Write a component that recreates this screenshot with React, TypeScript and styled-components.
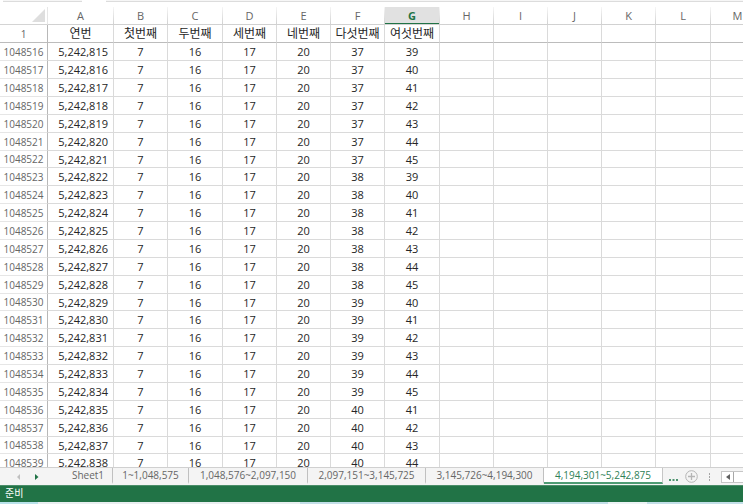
import React from "react";
import { useState } from "react";
import styled, { createGlobalStyle } from "styled-components";

const GlobalStyle = createGlobalStyle`
  * {
    box-sizing: border-box;
  }
  body {
    margin: 0;
    background: #fff;
    font-family: "Open Sans", "Noto Sans CJK KR", sans-serif;
    color: #262626;
  }
  button {
    margin: 0;
    padding: 0;
    border: 0;
    background: none;
    font: inherit;
  }
`;

const Window = styled.div`
  display: flex;
  flex-direction: column;
  height: 100vh;
  overflow: hidden;
`;

const FormulaEdge = styled.div`
  display: flex;
  flex: none;
  gap: 24px;
  height: 2px;
  padding-left: 3px;
`;

const FormulaBox = styled.div<{ $grow?: boolean }>`
  flex: ${({ $grow }) => ($grow ? "1" : "0 0 79px")};
  border-bottom: 1px solid #dcdcdc;
  background: #f6f6f6;
`;

const SheetArea = styled.main`
  flex: 1;
  min-height: 0;
  padding-top: 5px;
  overflow: hidden;
`;

const Grid = styled.table`
  width: 765px;
  table-layout: fixed;
  border-collapse: separate;
  border-spacing: 0;
  text-align: center;
  font-size: 11px;
  line-height: 16px;
`;

const Col = styled.col<{ $width: number }>`
  width: ${({ $width }) => $width}px;
`;

const Corner = styled.td`
  padding: 0 2px 2px 0;
  border-right: 1px solid #e6e6e6;
  border-bottom: 1px solid #d4d4d4;
  vertical-align: bottom;
`;

const CornerMark = styled.svg`
  display: block;
  margin-left: auto;
`;

const ColumnHead = styled.th<{ $active: boolean }>`
  height: 18px;
  padding: 0;
  border-right: 1px solid;
  border-image: linear-gradient(#f8f8f8, #d0d0d0) 1;
  border-bottom: 1px solid;
  font-weight: ${({ $active }) => ($active ? 700 : 400)};
  color: ${({ $active }) => ($active ? "#217346" : "#666")};
  background: ${({ $active }) => ($active ? "#e1e1e1" : "#fff")};
  box-shadow: ${({ $active }) => ($active ? "inset 0 -1px #217346" : "none")};
`;

const RowHead = styled.th`
  padding: 0;
  border-right: 1px solid #b8b8b8;
  border-bottom: 1px solid #e6e6e6;
  font-size: 10px;
  font-weight: 400;
  color: #666;
`;

const TitleCell = styled.td`
  padding: 0;
  border-right: 1px solid #dadada;
  font-size: 12px;
  white-space: nowrap;
`;

const Cell = styled.td<{ $serial?: boolean }>`
  padding: ${({ $serial }) => ($serial ? "0 5px 0 0" : "0")};
  border-right: 1px solid #dadada;
  border-bottom: 1px solid #dadada;
  text-align: ${({ $serial }) => ($serial ? "right" : "center")};
`;

const TitleRow = styled.tr`
  height: 18px;

  > * {
    border-bottom: 1px solid #bcbcbc;
  }
`;

const DataRow = styled.tr`
  height: 18px;

  &:nth-child(8n + 7) {
    height: 17px;
    line-height: 15px;
  }
`;

const SheetBar = styled.nav`
  display: flex;
  flex: none;
  height: 18px;
  border-top: 1px solid #d0d0d0;
  background: #f4f4f4;
  font-size: 10px;
  line-height: 14px;
`;

const TabScroll = styled.div`
  display: flex;
  flex: 0 0 64px;
  align-items: center;
  gap: 13px;
  padding-left: 16px;
`;

const IconButton = styled.button`
  display: flex;
  flex: none;
  align-items: center;
`;

const Tab = styled.button<{ $width: number; $active: boolean }>`
  flex: 0 0 ${({ $width }) => $width}px;
  height: 16px;
  border-right: 1px solid ${({ $active }) => ($active ? "#c6c6c6" : "#c0c0c0")};
  border-bottom: 2px solid ${({ $active }) => ($active ? "#4f9c74" : "transparent")};
  background: ${({ $active }) => ($active ? "#fff" : "transparent")};
  background-clip: padding-box;
  color: ${({ $active }) => ($active ? "#2f8157" : "#666")};
  white-space: nowrap;
`;

const BarTools = styled.div`
  display: flex;
  flex: 1;
  align-items: center;
  gap: 7px;
  min-width: 0;
  padding-left: 6px;
`;

const ScrollTrack = styled.div`
  display: flex;
  flex: 1;
  height: 12px;
  margin-left: 1px;
  border: 1px solid #c6c6c6;
  border-right: 0;
  background: #fff;
`;

const ScrollLeft = styled(IconButton)`
  width: 12px;
  justify-content: center;
  border-right: 1px solid #a8a8a8;
`;

const StatusBar = styled.footer`
  flex: none;
  height: 17px;
  padding-left: 5px;
  border-top: 1px solid #4b8d69;
  background: #217346;
  color: #fff;
  font-size: 10px;
  line-height: 15px;
`;

const DesktopEdge = styled.div`
  flex: none;
  height: 2px;
  background: linear-gradient(
    to right,
    #b9e2ea 0 38px,
    #e9eef0 38px 300px,
    #c3dfe8 300px 608px,
    #edf3f5 608px 647px,
    #c3dfe8 647px
  );
`;

const columns = [
  { name: "A", width: 66, title: "연번" },
  { name: "B", width: 54, title: "첫번째" },
  { name: "C", width: 55, title: "두번째" },
  { name: "D", width: 54, title: "세번째" },
  { name: "E", width: 54, title: "네번째" },
  { name: "F", width: 54, title: "다섯번째" },
  { name: "G", width: 55, title: "여섯번째" },
  { name: "H", width: 54, title: "" },
  { name: "I", width: 54, title: "" },
  { name: "J", width: 54, title: "" },
  { name: "K", width: 54, title: "" },
  { name: "L", width: 55, title: "" },
  { name: "M", width: 54, title: "" },
];

const pairs = [
  [37, 39], [37, 40], [37, 41], [37, 42], [37, 43], [37, 44], [37, 45],
  [38, 39], [38, 40], [38, 41], [38, 42], [38, 43], [38, 44], [38, 45],
  [39, 40], [39, 41], [39, 42], [39, 43], [39, 44], [39, 45],
  [40, 41], [40, 42], [40, 43], [40, 44],
];

const rows = pairs.map(([fifth, sixth], index) => ({
  row: 1048516 + index,
  serial: (5242815 + index).toLocaleString("en-US"),
  values: [7, 16, 17, 20, fifth, sixth, "", "", "", "", "", ""],
}));

const sheets = [
  { name: "Sheet1", width: 49 },
  { name: "1~1,048,575", width: 76 },
  { name: "1,048,576~2,097,150", width: 119 },
  { name: "2,097,151~3,145,725", width: 118 },
  { name: "3,145,726~4,194,300", width: 118 },
  { name: "4,194,301~5,242,875", width: 119 },
];

const App = () => {
  const [activeSheet, setActiveSheet] = useState<number>(5);

  return (
    <Window>
      <GlobalStyle />
      <FormulaEdge>
        <FormulaBox />
        <FormulaBox $grow />
      </FormulaEdge>

      <SheetArea>
        <Grid>
          <colgroup>
            <Col $width={48} />
            {columns.map((column) => (
              <Col key={column.name} $width={column.width} />
            ))}
          </colgroup>
          <thead>
            <tr>
              <Corner>
                <CornerMark width="13" height="13" viewBox="0 0 13 13">
                  <path d="M13 0v13H0z" fill="#dedede" />
                </CornerMark>
              </Corner>
              {columns.map((column) => (
                <ColumnHead key={column.name} scope="col" $active={column.name === "G"}>
                  {column.name}
                </ColumnHead>
              ))}
            </tr>
            <TitleRow>
              <RowHead scope="row">1</RowHead>
              {columns.map((column) => (
                <TitleCell key={column.name}>{column.title}</TitleCell>
              ))}
            </TitleRow>
          </thead>
          <tbody>
            {rows.map((item) => (
              <DataRow key={item.row}>
                <RowHead scope="row">{item.row}</RowHead>
                <Cell $serial>{item.serial}</Cell>
                {item.values.map((value, index) => (
                  <Cell key={index}>{value}</Cell>
                ))}
              </DataRow>
            ))}
          </tbody>
        </Grid>
      </SheetArea>

      <SheetBar>
        <TabScroll>
          <IconButton aria-label="이전 시트">
            <svg width="5" height="6" viewBox="0 0 5 6">
              <path d="M4 0v6L1 3z" fill="#c0c0c0" />
            </svg>
          </IconButton>
          <IconButton aria-label="다음 시트">
            <svg width="5" height="6" viewBox="0 0 5 6">
              <path d="M1 0v6l3.500-3z" fill="#217346" />
            </svg>
          </IconButton>
        </TabScroll>
        {sheets.map((sheet, index) => (
          <Tab
            key={sheet.name}
            $width={sheet.width}
            $active={index === activeSheet}
            onClick={() => setActiveSheet(index)}
          >
            {sheet.name}
          </Tab>
        ))}
        <BarTools>
          <IconButton aria-label="시트 목록">
            <svg width="9" height="12" viewBox="0 0 9 12">
              <path d="M0 8h2v2H0zM3.500 8h2v2h-2zM7 8h2v2H7z" fill="#4f9470" />
            </svg>
          </IconButton>
          <IconButton aria-label="새 시트">
            <svg width="13" height="13" viewBox="0 0 13 13" fill="none" stroke="#b5b5b5">
              <circle cx="6.500" cy="6.500" r="5.800" />
              <path d="M6.500 3v7M3 6.500h7" strokeWidth="1.300" />
            </svg>
          </IconButton>
          <svg width="8" height="8" viewBox="0 0 8 8">
            <path d="M4 0h1v2H4zM4 3h1v2H4zM4 6h1v2H4z" fill="#a6a6a6" />
          </svg>
          <ScrollTrack>
            <ScrollLeft aria-label="왼쪽으로 스크롤">
              <svg width="4" height="6" viewBox="0 0 4 6">
                <path d="M4 0v6L0 3z" fill="#606060" />
              </svg>
            </ScrollLeft>
          </ScrollTrack>
        </BarTools>
      </SheetBar>
      <StatusBar>준비</StatusBar>
      <DesktopEdge />
    </Window>
  );
};

export default App;
